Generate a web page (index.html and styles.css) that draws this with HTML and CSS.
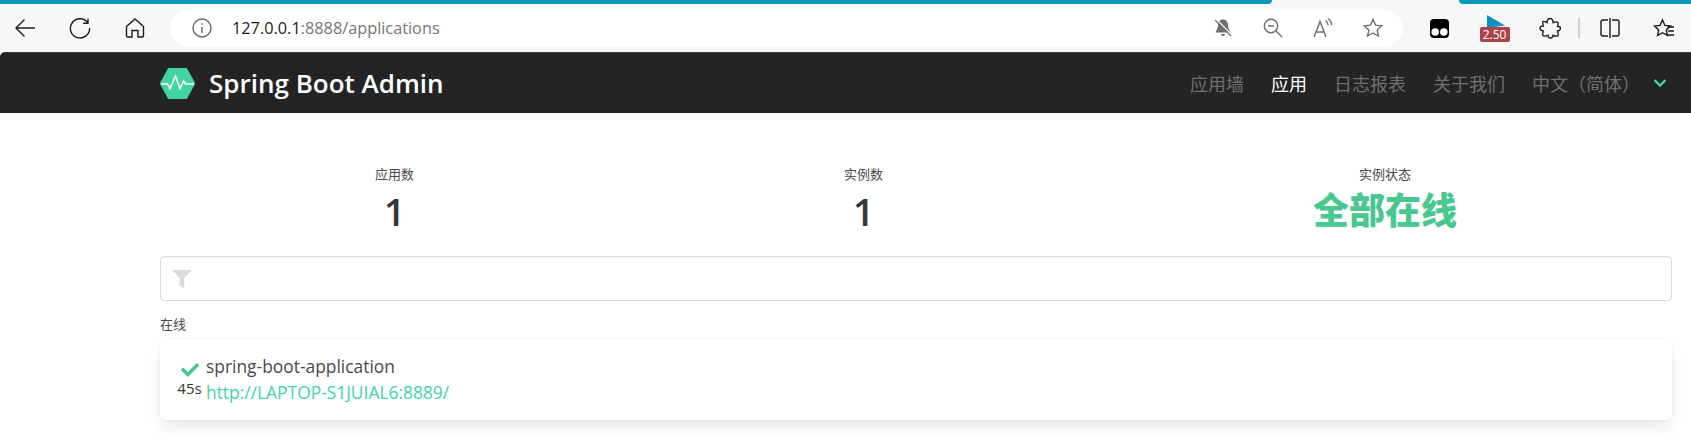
FILE: index.html
```html
<!DOCTYPE html>
<html lang="zh-CN">
<head>
    <meta charset="UTF-8">
    <meta name="viewport" content="width=device-width, initial-scale=1.0">
    <title>Spring Boot Admin</title>
    <link rel="stylesheet" href="styles.css">
</head>
<body>
    <!-- Browser chrome -->
    <div class="browser">
        <div class="tabstrip">
            <div class="tab-line tab-left"></div>
            <div class="tab-line tab-right"></div>
        </div>
        <div class="toolbar">
            <div class="tool-btn">
                <svg class="icon-22" viewBox="0 0 22 22"><path d="M21 11H2M10.500 2.500 2 11l8.500 8.500"/></svg>
            </div>
            <div class="tool-btn">
                <svg class="icon-22" viewBox="0 0 22 22"><path d="M18.600 5.500A9.600 9.600 0 1 0 20.600 11M19 1.500v4.800h-4.800"/></svg>
            </div>
            <div class="tool-btn">
                <svg class="icon-22" viewBox="0 0 22 22"><path d="M2.500 9.500 11 2l8.500 7.500v9.200a1.300 1.300 0 0 1-1.300 1.300H14v-6.500H8V20H3.800a1.300 1.300 0 0 1-1.300-1.300z"/></svg>
            </div>
            <div class="address">
                <svg class="icon-info" viewBox="0 0 20 20"><circle cx="10" cy="10" r="9"/><path d="M10 9v6M10 5.200v1.600"/></svg>
                <div class="url"><span class="url-host">127.0.0.1</span>:8888/applications</div>
                <div class="address-actions">
                    <svg class="icon-20" viewBox="0 0 20 20"><path class="filled" d="M10 1.500c-3.200 0-5 2.400-5 5.500 0 4-1.800 5.500-2.500 7.500h15c-.7-2-2.500-3.500-2.500-7.500 0-3.100-1.800-5.500-5-5.500zM8 16h4a2 2 0 0 1-4 0z"/><path class="cut" d="M3 1l16 16"/><path class="slash" d="M2 2l16 16"/></svg>
                    <svg class="icon-20" viewBox="0 0 20 20"><circle cx="8" cy="8" r="6.700"/><path d="M5 8h6M13 13l6 6"/></svg>
                    <svg class="icon-20" viewBox="0 0 20 20"><path d="M1 19 7 3.500 13 19M3 14h8M12.500 2.500c1.500 1 2.500 2.700 2.600 4.800M15 .5c2.200 1.600 3.600 4 3.700 6.800"/></svg>
                    <svg class="icon-20" viewBox="0 0 20 20"><path d="M10 1.500l2.600 5.600 6.100.7-4.500 4.200 1.200 6L10 15l-5.400 3 1.200-6L1.300 7.800l6.100-.7z"/></svg>
                </div>
            </div>
            <div class="ext-btn">
                <svg class="icon-ext" viewBox="0 0 19 19"><rect width="19" height="19" rx="4" fill="#000"/><circle cx="5.200" cy="13" r="3.800" fill="#fff"/><circle cx="13.800" cy="13" r="3.800" fill="#fff"/></svg>
            </div>
            <div class="ext-btn speed">
                <svg class="icon-speed" viewBox="0 0 18 13"><path d="M0 0l18 10.500-18 2.500z" fill="#0d8fc4"/></svg>
                <span class="speed-badge">2.50</span>
            </div>
            <div class="ext-btn">
                <svg class="icon-22" viewBox="0 0 22 22"><path d="M8 5.500C7.800 3 9.200 1.500 11 1.500s3.200 1.500 3 4c1-.3 4.500-1 5 0 .6 1.200-.5 3.500-.5 4 2.300-.2 3 .6 3 1.700 0 1.700-1.100 2.600-3 2.800.5 1.500 1.200 3.800.3 4.700-1 1-3.500 0-4.800-.4.2 1.800-1 2.700-2.500 2.700s-2.800-1-2.500-2.700c-1.500.5-4 1.300-5 .3-1-1-.1-3.300.3-4.600C2.500 13.800 1 13 1 11.300S2.500 8.700 4.300 9C4 8 3.100 5.500 4 4.600c.9-.9 3 .4 4 .9z"/></svg>
            </div>
            <div class="tool-divider"></div>
            <div class="ext-btn">
                <svg class="icon-22" viewBox="0 0 22 22"><path d="M9 3H4a2 2 0 0 0-2 2v12a2 2 0 0 0 2 2h5M13 3h5a2 2 0 0 1 2 2v12a2 2 0 0 1-2 2h-5M11 1v20"/></svg>
            </div>
            <div class="ext-btn last">
                <svg class="icon-22" viewBox="0 0 22 22"><path d="M10 1.500l2.400 5.400 5.600.6-4.200 3.900 1.100 5.500L10 14.200l-4.900 2.700 1.100-5.500L2 7.500l5.600-.6zM15 8.500h6.500M15.500 12.500h6M14 16.500h7.500" transform="translate(-.5 1.500)"/></svg>
            </div>
        </div>
    </div>

    <!-- Navbar -->
    <nav class="navbar">
        <svg class="logo" viewBox="0 0 35 31">
            <path class="logo-hex" d="M9.500 0h16c1 0 1.600.4 2 1.200l7 12.800c.6 1 .6 2 0 3l-7 12.800c-.4.800-1 1.200-2 1.200h-16c-1 0-1.600-.4-2-1.200l-7-12.800c-.6-1-.6-2 0-3l7-12.800C7.900.4 8.500 0 9.500 0z"/>
            <path class="logo-pulse" d="M1 16h6.500l2.500 4.500L15.500 8l4.500 12.500 3.500-7.500 2 3H34"/>
        </svg>
        <span class="brand">Spring Boot Admin</span>
        <div class="nav-items">
            <a class="nav-item">应用墙</a>
            <a class="nav-item active">应用</a>
            <a class="nav-item">日志报表</a>
            <a class="nav-item">关于我们</a>
            <a class="nav-item lang">中文（简体）</a>
            <svg class="chevron" viewBox="0 0 14 10"><path d="M1.500 2 7 7.500 12.500 2"/></svg>
        </div>
    </nav>

    <!-- Page content -->
    <main class="container">
        <div class="stats">
            <div class="stat">
                <p class="stat-label">应用数</p>
                <p class="stat-value">1</p>
            </div>
            <div class="stat">
                <p class="stat-label">实例数</p>
                <p class="stat-value">1</p>
            </div>
            <div class="stat">
                <p class="stat-label">实例状态</p>
                <p class="stat-value ok">全部在线</p>
            </div>
        </div>

        <div class="filter">
            <svg class="filter-icon" viewBox="0 0 512 512"><path d="M487.976 0H24.028C2.710 0-8.047 25.866 7.058 40.971L192 225.941V432c0 7.831 3.821 15.170 10.237 19.662l80 55.980C298.020 518.690 320 507.493 320 487.980V225.941l184.947-184.970C520.021 25.896 509.338 0 487.976 0z"/></svg>
        </div>

        <p class="group-title">在线</p>

        <div class="app-card">
            <div class="app-status">
                <svg class="check" viewBox="0 0 512 512"><path d="M173.898 439.404l-166.400-166.400c-9.997-9.997-9.997-26.206 0-36.204l36.203-36.204c9.997-9.998 26.207-9.998 36.204 0L192 312.690 432.095 72.596c9.997-9.997 26.207-9.997 36.204 0l36.203 36.204c9.997 9.997 9.997 26.206 0 36.204l-294.400 294.401c-9.998 9.997-26.207 9.997-36.204-.001z"/></svg>
                <span class="uptime">45s</span>
            </div>
            <div class="app-info">
                <span class="app-name">spring-boot-application</span>
                <a class="app-url">http://LAPTOP-S1JUIAL6:8889/</a>
            </div>
        </div>
    </main>
</body>
</html>
```

FILE: styles.css
```css
* {
    margin: 0;
    padding: 0;
    box-sizing: border-box;
}

html, body {
    height: 442px;
    overflow: hidden;
}

body {
    font-family: "Open Sans", "Noto Sans CJK SC", sans-serif;
    background-color: #fff;
    color: #363636;
}

/* Browser chrome */
.browser {
    height: 52px;
    background: #f7f7f7;
}

.tabstrip {
    display: flex;
    justify-content: space-between;
    height: 4px;
}

.tab-line {
    background: #0899b9;
}

.tab-left {
    width: 1272px;
    border-bottom-right-radius: 6px;
}

.tab-right {
    width: 232px;
    border-bottom-left-radius: 6px;
}

.toolbar {
    display: flex;
    align-items: center;
    height: 48px;
}

.toolbar svg {
    fill: none;
    stroke: #1c1c1c;
    stroke-width: 1.4;
}

.tool-btn {
    display: flex;
    justify-content: center;
    width: 50px;
    margin-right: 5px;
}

.icon-22 {
    width: 22px;
    height: 22px;
}

.icon-20 {
    width: 20px;
    height: 20px;
}

.address {
    display: flex;
    align-items: center;
    width: 1233px;
    height: 37px;
    margin-left: 5px;
    padding: 0 20px 0 22px;
    background: #fff;
    border-radius: 19px;
}

.toolbar .icon-info {
    width: 20px;
    height: 20px;
    stroke: #666;
}

.url {
    margin-left: 20px;
    font-size: 16.3px;
    color: #767676;
}

.url-host {
    color: #1c1c1c;
}

.address-actions {
    display: flex;
    gap: 30px;
    margin-left: auto;
}

.toolbar .address-actions svg {
    stroke: #6e6e6e;
}

.toolbar .address-actions .filled {
    fill: #6e6e6e;
    stroke: none;
}

.toolbar .address-actions .cut {
    stroke: #fff;
    stroke-width: 1.2;
}

.toolbar .address-actions .slash {
    stroke-width: 1.2;
}

.ext-btn {
    display: flex;
    justify-content: center;
    width: 55px;
}

.ext-btn.last {
    width: 54px;
}

.address + .ext-btn {
    margin-left: 9px;
}

.icon-ext {
    width: 19px;
    height: 19px;
}

.toolbar .icon-ext, .toolbar .icon-ext * {
    stroke: none;
}

.speed {
    flex-direction: column;
    align-items: center;
    height: 30px;
}

.toolbar .icon-speed {
    width: 18px;
    height: 13px;
    margin-left: 3px;
    stroke: none;
    flex: none;
}

.speed-badge {
    width: 30px;
    height: 15px;
    margin-top: -1px;
    background: #ad4349;
    border-radius: 2px;
    color: #fff;
    font-size: 12px;
    line-height: 15px;
    text-align: center;
}

.tool-divider {
    width: 2px;
    height: 20px;
    margin: 0 2px 0 1px;
    background: #d0d0d0;
}

/* Navbar */
.navbar {
    display: flex;
    align-items: center;
    height: 61px;
    padding: 0 24px 0 160px;
    background: #242424;
    border-top: 1px solid #3a3a3a;
    border-top-left-radius: 5px;
}

.logo {
    width: 35px;
    height: 31px;
}

.logo-hex {
    fill: #42d3a5;
}

.logo-pulse {
    fill: none;
    stroke: #fff;
    stroke-width: 1.5;
}

.brand {
    margin-left: 14px;
    color: #fff;
    font-size: 26px;
    font-weight: 600;
}

.nav-items {
    display: flex;
    align-items: center;
    gap: 27px;
    margin-left: auto;
}

.nav-item {
    color: #6f6f6f;
    font-size: 18px;
}

.nav-item.active {
    color: #fff;
}

.lang {
    margin-right: -14px;
}

.chevron {
    width: 14px;
    height: 10px;
    fill: none;
    stroke: #42d3a5;
    stroke-width: 2.4;
}

/* Page content */
.container {
    padding: 54px 19px 0 160px;
}

.stats {
    display: flex;
    text-align: center;
}

.stat {
    flex: 1 1 auto;
}

.stat-label {
    font-size: 13px;
    line-height: 14px;
    color: #4a4a4a;
}

.stat-value {
    margin-top: 5px;
    font-size: 38px;
    font-weight: 600;
    line-height: 50px;
    color: #363636;
}

.stat-value.ok {
    font-size: 36px;
    color: #48c78e;
    font-weight: 900;
}

.filter {
    display: flex;
    align-items: center;
    height: 45px;
    margin-top: 20px;
    padding-left: 12px;
    border: 1px solid #dbdbdb;
    border-radius: 4px;
    box-shadow: inset 0 1px 2px rgba(10,10,10,0.05);
}

.filter-icon {
    width: 18px;
    height: 18px;
    fill: #dbdbdb;
}

.group-title {
    margin-top: 15px;
    font-size: 13px;
    line-height: 16px;
    color: #4a4a4a;
}

.app-card {
    display: flex;
    align-items: center;
    gap: 5px;
    height: 81px;
    margin-top: 7px;
    padding: 0 0 2px 18px;
    background: #fff;
    border-radius: 6px;
    box-shadow: 0 8px 16px -2px rgba(10,10,10,0.1), 0 0 0 1px rgba(10,10,10,0.02);
}

.app-status {
    display: flex;
    flex-direction: column;
    align-items: center;
    width: 23px;
}

.check {
    width: 18px;
    height: 18px;
    fill: #48c78e;
}

.uptime {
    font-size: 15px;
    line-height: 18px;
    color: #363636;
}

.app-info {
    display: flex;
    flex-direction: column;
    font-size: 17.4px;
    line-height: 26px;
}

.app-name {
    color: #4a4a4a;
}

.app-url {
    color: #42d3a5;
}
```
